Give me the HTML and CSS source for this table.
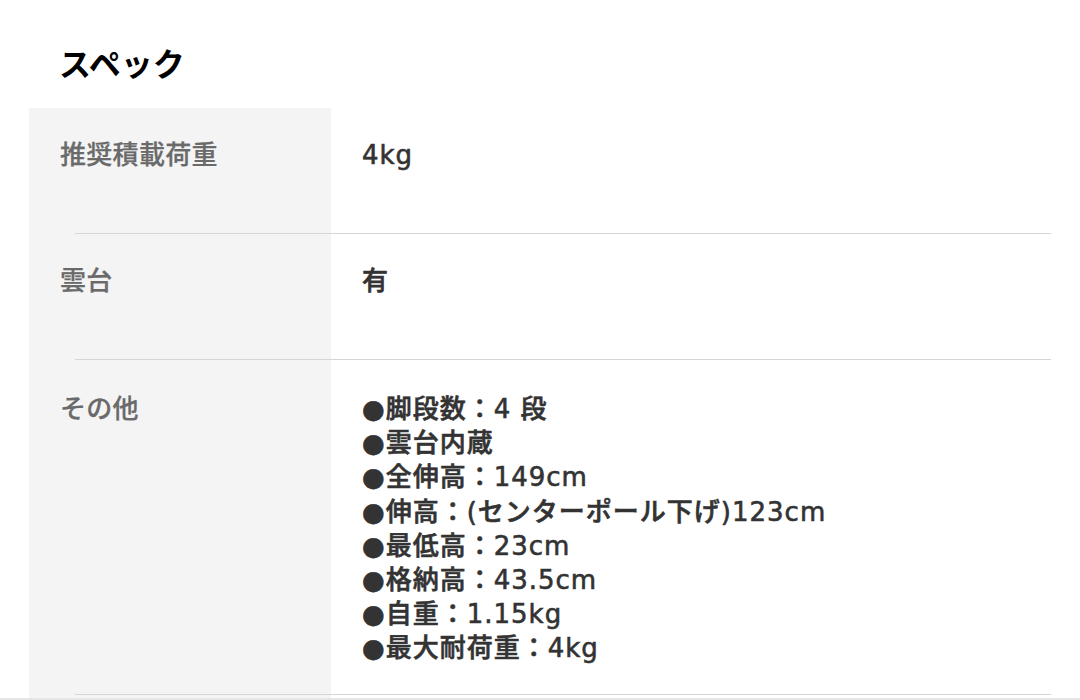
FILE: index.html
```html
<!DOCTYPE html>
<html lang="ja">
<head>
<meta charset="utf-8">
<link rel="stylesheet" href="styles.css">
</head>
<body>
<section class="spec">
  <h2 class="spec-title">スペック</h2>
  <div class="spec-table">
    <div class="spec-row">
      <div class="spec-label">推奨積載荷重</div>
      <div class="spec-value">4kg</div>
    </div>
    <div class="spec-rule"></div>
    <div class="spec-row">
      <div class="spec-label">雲台</div>
      <div class="spec-value">有</div>
    </div>
    <div class="spec-rule"></div>
    <div class="spec-row spec-row-multi">
      <div class="spec-label">その他</div>
      <div class="spec-value">
        <div>●脚段数：4 段</div>
        <div>●雲台内蔵</div>
        <div>●全伸高：149cm</div>
        <div>●伸高：(センターポール下げ)123cm</div>
        <div>●最低高：23cm</div>
        <div>●格納高：43.5cm</div>
        <div>●自重：1.15kg</div>
        <div>●最大耐荷重：4kg</div>
      </div>
    </div>
    <div class="spec-rule"></div>
    <div class="spec-tail"></div>
  </div>
</section>
<div class="next-band"></div>
</body>
</html>
```

FILE: styles.css
```css
html, body {
  margin: 0;
  padding: 0;
  background: #ffffff;
}
body {
  font-family: "DejaVu Sans", "Noto Sans CJK JP", sans-serif;
  width: 1080px;
  height: 700px;
  overflow: hidden;
}
.spec {
  padding-top: 40px;
}
.spec-title {
  margin: 0 0 0 59px;
  font-family: "Noto Sans CJK JP", sans-serif;
  font-size: 32px;
  line-height: 44px;
  font-weight: 700;
  color: #000000;
  height: 68px;
}
.spec-table {
  margin-left: 29px;
  width: 1022px;
  background: linear-gradient(to right, #f4f4f4 0, #f4f4f4 302px, #ffffff 302px);
}
.spec-row {
  display: grid;
  grid-template-columns: 302px 1fr;
  min-height: 125px;
  box-sizing: border-box;
  padding: 30px 0 30px;
}
.spec-row-multi {
  padding-top: 32px;
  padding-bottom: 28px;
}
.spec-label {
  padding-left: 31px;
  font-size: 26px;
  line-height: 34px;
  font-weight: 500;
  letter-spacing: 0.3px;
  color: #6a6a6a;
  -webkit-text-stroke: 0.25px #6a6a6a;
}
.spec-value {
  padding-left: 31px;
  font-size: 26px;
  line-height: 34.2px;
  font-weight: 500;
  letter-spacing: 1px;
  color: #333333;
  -webkit-text-stroke: 0.6px #333333;
}
.spec-rule {
  margin-left: 46px;
  height: 1px;
  background: #d6d6d6;
}
.spec-tail {
  height: 3px;
  width: 302px;
}
.next-band {
  height: 3px;
  background: #e6e6e6;
}
```
